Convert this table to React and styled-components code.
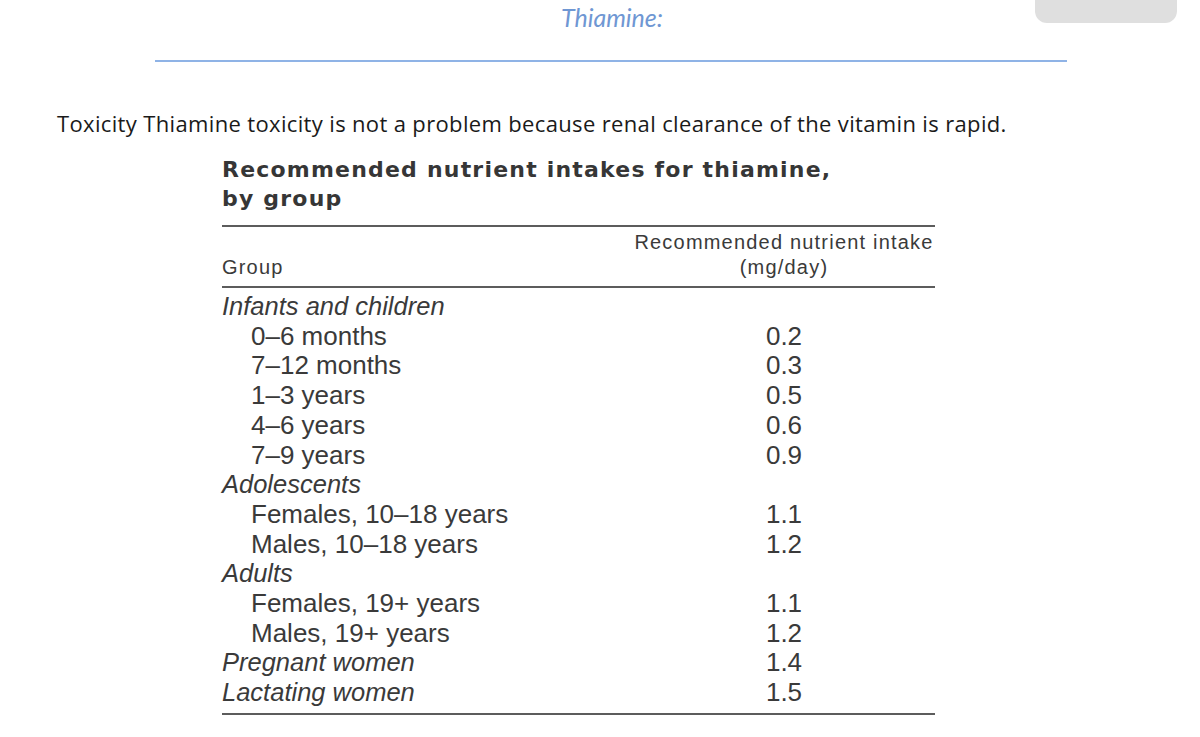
import React from "react";
import styled, { createGlobalStyle } from "styled-components";

const GlobalStyle = createGlobalStyle`
  body {
    margin: 0;
    background: #ffffff;
  }
`;

const Page = styled.div`
  position: relative;
  width: 1200px;
  height: 737px;
  overflow: hidden;
  background: #ffffff;
`;

const CornerTab = styled.div`
  position: absolute;
  top: 0;
  left: 1035px;
  width: 142px;
  height: 23px;
  background: #dfdfdf;
  border-radius: 0 0 12px 12px;
`;

const Header = styled.header`
  margin-left: 155px;
  width: 912px;
  padding-top: 1px;
`;

const Heading = styled.div`
  font-family: Lato, "Open Sans", sans-serif;
  font-style: italic;
  font-size: 25px;
  line-height: 32px;
  color: #6f97d3;
  text-align: center;
  padding-left: 2px;
`;

const Rule = styled.div`
  margin-top: 27px;
  height: 2px;
  background: #8fb3e6;
`;

const Body = styled.p`
  margin: 47px 0 0 57px;
  font-family: "Open Sans", Lato, sans-serif;
  font-size: 22px;
  line-height: 28px;
  letter-spacing: 0.35px;
  color: #1a1a1a;
  white-space: nowrap;
`;

const TableBlock = styled.section`
  margin: 18px 0 0 222px;
  width: 713px;
`;

const Caption = styled.h2`
  margin: 0 0 12px;
  font-family: "DejaVu Sans", "Liberation Sans", sans-serif;
  font-weight: 700;
  font-size: 22px;
  line-height: 29px;
  letter-spacing: 1.2px;
  color: #363636;
`;

const Grid = styled.div`
  display: grid;
  grid-template-columns: 1fr 302px;
  font-family: "Liberation Sans", Arial, sans-serif;
  color: #3a3a3a;
`;

const HeadRow = styled.div`
  grid-column: 1 / -1;
  display: grid;
  grid-template-columns: 1fr 302px;
  align-items: end;
  padding: 3px 0 6px;
  border-top: 2px solid #5c5c5c;
  border-bottom: 2px solid #5c5c5c;
  font-size: 20px;
  line-height: 25px;
  letter-spacing: 1.2px;
`;

const HeadCell = styled.div`
  text-align: ${(p) => (p.center ? "center" : "left")};
`;

const BodyRows = styled.div`
  grid-column: 1 / -1;
  display: grid;
  grid-template-columns: 1fr 302px;
  padding: 4px 0 5px;
  border-bottom: 2px solid #5c5c5c;
  line-height: 29.7px;
`;

const Label = styled.div`
  padding-left: ${(p) => (p.sub ? "29px" : "0")};
  font-size: ${(p) => (p.italic ? "25.5px" : "26px")};
  font-style: ${(p) => (p.italic ? "italic" : "normal")};
  white-space: nowrap;
`;

const Value = styled.div`
  font-size: 26px;
  text-align: center;
`;

const rows = [
  { label: "Infants and children", italic: true },
  { label: "0–6 months", value: "0.2", sub: true },
  { label: "7–12 months", value: "0.3", sub: true },
  { label: "1–3 years", value: "0.5", sub: true },
  { label: "4–6 years", value: "0.6", sub: true },
  { label: "7–9 years", value: "0.9", sub: true },
  { label: "Adolescents", italic: true },
  { label: "Females, 10–18 years", value: "1.1", sub: true },
  { label: "Males, 10–18 years", value: "1.2", sub: true },
  { label: "Adults", italic: true },
  { label: "Females, 19+ years", value: "1.1", sub: true },
  { label: "Males, 19+ years", value: "1.2", sub: true },
  { label: "Pregnant women", value: "1.4", italic: true },
  { label: "Lactating women", value: "1.5", italic: true },
];

export default function App() {
  return (
    <>
      <GlobalStyle />
      <Page>
        <CornerTab />
        <Header>
          <Heading>Thiamine:</Heading>
          <Rule />
        </Header>
        <Body>
          Toxicity Thiamine toxicity is not a problem because renal clearance
          of the vitamin is rapid.
        </Body>
        <TableBlock>
          <Caption>
            Recommended nutrient intakes for thiamine,
            <br />
            by group
          </Caption>
          <Grid>
            <HeadRow>
              <HeadCell>Group</HeadCell>
              <HeadCell center>
                Recommended nutrient intake
                <br />
                (mg/day)
              </HeadCell>
            </HeadRow>
            <BodyRows>
              {rows.map((r) => (
                <React.Fragment key={r.label}>
                  <Label sub={r.sub} italic={r.italic}>
                    {r.label}
                  </Label>
                  <Value>{r.value || ""}</Value>
                </React.Fragment>
              ))}
            </BodyRows>
          </Grid>
        </TableBlock>
      </Page>
    </>
  );
}
